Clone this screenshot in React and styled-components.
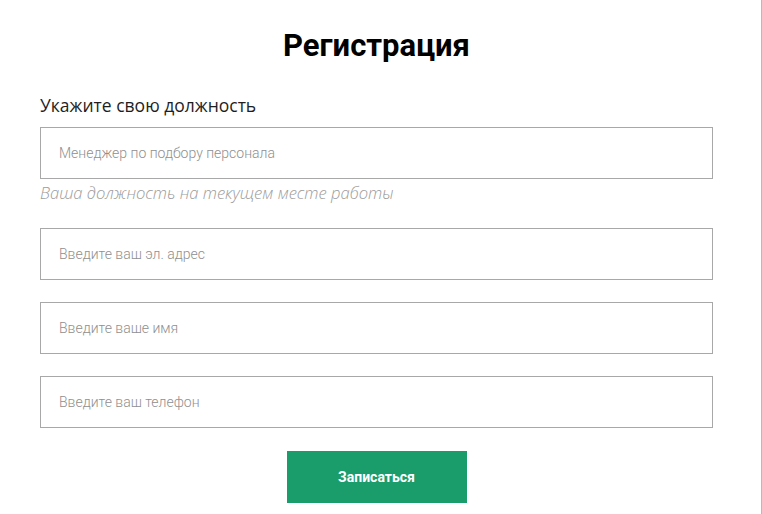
import React from 'react';
import styled, { createGlobalStyle } from 'styled-components';

const GlobalStyle = createGlobalStyle`
    html, body {
        margin: 0;
        padding: 0;
        background: #ffffff;
    }
    * {
        box-sizing: border-box;
    }
`;

const Page = styled.div`
    min-height: 514px;
    border-right: 1px solid #b9b9b9;
    background: #ffffff;
`;

const Form = styled.form`
    display: flex;
    flex-direction: column;
    width: 713px;
    padding: 26px 0 0 40px;
`;

const Title = styled.h1`
    margin: 0 0 27px 0;
    font-family: Roboto, "Liberation Sans", sans-serif;
    font-weight: 700;
    font-size: 31px;
    line-height: 40px;
    color: #000000;
    text-align: center;
`;

const Label = styled.label`
    font-family: "Open Sans", "Liberation Sans", sans-serif;
    font-size: 17.5px;
    line-height: 24px;
    color: #1e1e1e;
    margin-bottom: 10px;
`;

const Input = styled.input`
    display: block;
    width: 100%;
    height: 52px;
    border: 1px solid #a8a8a8;
    border-radius: 0;
    padding: 0 18px;
    font-family: Roboto, "Liberation Sans", sans-serif;
    font-size: 14px;
    font-weight: 300;
    color: #333;
    background: #fff;
    outline: none;
    margin-bottom: ${p => p.$gap}px;

    &::placeholder {
        color: #8f8f8f;
    }
`;

const Hint = styled.p`
    margin: 1px 0 22px 0;
    font-family: "Open Sans", "Liberation Sans", sans-serif;
    font-style: italic;
    font-weight: 300;
    font-size: 16.6px;
    line-height: 26px;
    color: #9c9c9c;
`;

const SubmitButton = styled.button`
    align-self: center;
    width: 180px;
    height: 52px;
    margin-top: 1px;
    border: none;
    background-color: #1b9c6b;
    color: #ffffff;
    font-family: Roboto, "Liberation Sans", sans-serif;
    font-weight: 700;
    font-size: 14px;
    cursor: pointer;
`;

export default function App() {
    const fields = [
        'Введите ваш эл. адрес',
        'Введите ваше имя',
        'Введите ваш телефон',
    ];

    return (
        <Page>
            <GlobalStyle />
            <Form onSubmit={e => e.preventDefault()}>
                <Title>Регистрация</Title>
                <Label htmlFor="position">Укажите свою должность</Label>
                <Input id="position" type="text" placeholder="Менеджер по подбору персонала" $gap={0} />
                <Hint>Ваша должность на текущем месте работы</Hint>
                {fields.map(text => (
                    <Input key={text} type="text" placeholder={text} $gap={22} />
                ))}
                <SubmitButton type="submit">Записаться</SubmitButton>
            </Form>
        </Page>
    );
}
